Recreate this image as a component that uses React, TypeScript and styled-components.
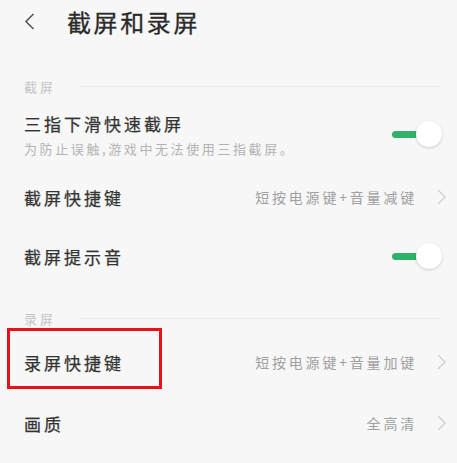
import React from 'react';
import styled, { createGlobalStyle } from 'styled-components';

const GlobalStyle = createGlobalStyle`
    html, body {
        margin: 0;
        padding: 0;
        background: #f7f7f7;
    }
    body {
        font-family: 'Noto Sans CJK SC', 'Noto Sans', sans-serif;
        -webkit-font-smoothing: antialiased;
    }
`;

const Page = styled.div`
    width: 457px;
    height: 463px;
    overflow: hidden;
    background: #f7f7f7;
    display: flex;
    flex-direction: column;
`;

const Header = styled.div`
    height: 42px;
    display: flex;
    align-items: center;
    padding-left: 24px;
`;

const BackButton = styled.div`
    width: 12px;
    height: 18px;
    display: flex;
    align-items: center;
    margin-right: 31px;
`;

const Title = styled.h1`
    margin: 0;
    font-size: 24px;
    font-weight: 400;
    letter-spacing: 2.6px;
    color: #2a2a2a;
    -webkit-text-stroke: 0.3px #2a2a2a;
`;

const SectionHeader = styled.div<{ $top: number }>`
    height: 30px;
    margin-top: ${(p) => p.$top}px;
    display: flex;
    align-items: center;
    padding: 0 17px 0 24px;
    gap: 24px;
`;

const SectionLabel = styled.span`
    font-size: 13px;
    letter-spacing: 3px;
    color: #c4c4c4;
`;

const SectionLine = styled.div`
    flex: 1;
    height: 1px;
    background: #ececec;
`;

const Row = styled.div<{ $height: number }>`
    position: relative;
    height: ${(p) => p.$height}px;
    display: flex;
    align-items: center;
    padding: 0 11px 0 24px;
`;

const RowText = styled.div`
    flex: 1;
    display: flex;
    flex-direction: column;
`;

const RowTitle = styled.span`
    font-size: 17px;
    font-weight: 400;
    letter-spacing: 3px;
    color: #333;
    -webkit-text-stroke: 0.25px #333;
`;

const RowSub = styled.span`
    margin-top: 3px;
    font-size: 13px;
    letter-spacing: 2.6px;
    color: #b3b3b3;
`;

const RowValue = styled.span`
    font-size: 14px;
    letter-spacing: 2.8px;
    color: #a0a0a0;
    margin-right: 20px;
`;

const Switch = styled.div`
    position: relative;
    width: 50px;
    height: 26px;
    margin-right: 4px;
    display: flex;
    align-items: center;
`;

const SwitchTrack = styled.div`
    width: 36px;
    height: 7px;
    border-radius: 4px;
    background: #2fb26a;
`;

const SwitchKnob = styled.div`
    position: absolute;
    right: 0;
    top: 0;
    width: 26px;
    height: 26px;
    border-radius: 50%;
    background: #fff;
    box-shadow: 0 1px 3px rgba(0, 0, 0, 0.18);
`;

const Highlight = styled.div`
    position: absolute;
    left: 7px;
    top: -5px;
    width: 155px;
    height: 61px;
    box-sizing: border-box;
    border: 3px solid #ec1119;
    pointer-events: none;
`;

const Chevron = () => (
    <svg width="9" height="16" viewBox="0 0 9 16">
        <path d="M1 1l7 7-7 7" fill="none" stroke="#cfcfcf" strokeWidth="1.4" />
    </svg>
);

const Toggle = () => (
    <Switch>
        <SwitchTrack />
        <SwitchKnob />
    </Switch>
);

const App: React.FC = () => (
    <Page>
        <GlobalStyle />
        <Header>
            <BackButton>
                <svg width="11" height="17" viewBox="0 0 11 17">
                    <path d="M9.5 1L2 8.5 9.5 16" fill="none" stroke="#555" strokeWidth="1.6" />
                </svg>
            </BackButton>
            <Title>截屏和录屏</Title>
        </Header>

        <SectionHeader $top={29}>
            <SectionLabel>截屏</SectionLabel>
            <SectionLine />
        </SectionHeader>
        <Row $height={66}>
            <RowText>
                <RowTitle>三指下滑快速截屏</RowTitle>
                <RowSub>为防止误触,游戏中无法使用三指截屏。</RowSub>
            </RowText>
            <Toggle />
        </Row>
        <Row $height={60}>
            <RowText>
                <RowTitle>截屏快捷键</RowTitle>
            </RowText>
            <RowValue>短按电源键+音量减键</RowValue>
            <Chevron />
        </Row>
        <Row $height={58}>
            <RowText>
                <RowTitle>截屏提示音</RowTitle>
            </RowText>
            <Toggle />
        </Row>

        <SectionHeader $top={18}>
            <SectionLabel>录屏</SectionLabel>
            <SectionLine />
        </SectionHeader>
        <Row $height={58}>
            <Highlight />
            <RowText>
                <RowTitle>录屏快捷键</RowTitle>
            </RowText>
            <RowValue>短按电源键+音量加键</RowValue>
            <Chevron />
        </Row>
        <Row $height={64}>
            <RowText>
                <RowTitle>画质</RowTitle>
            </RowText>
            <RowValue>全高清</RowValue>
            <Chevron />
        </Row>
    </Page>
);

export default App;
